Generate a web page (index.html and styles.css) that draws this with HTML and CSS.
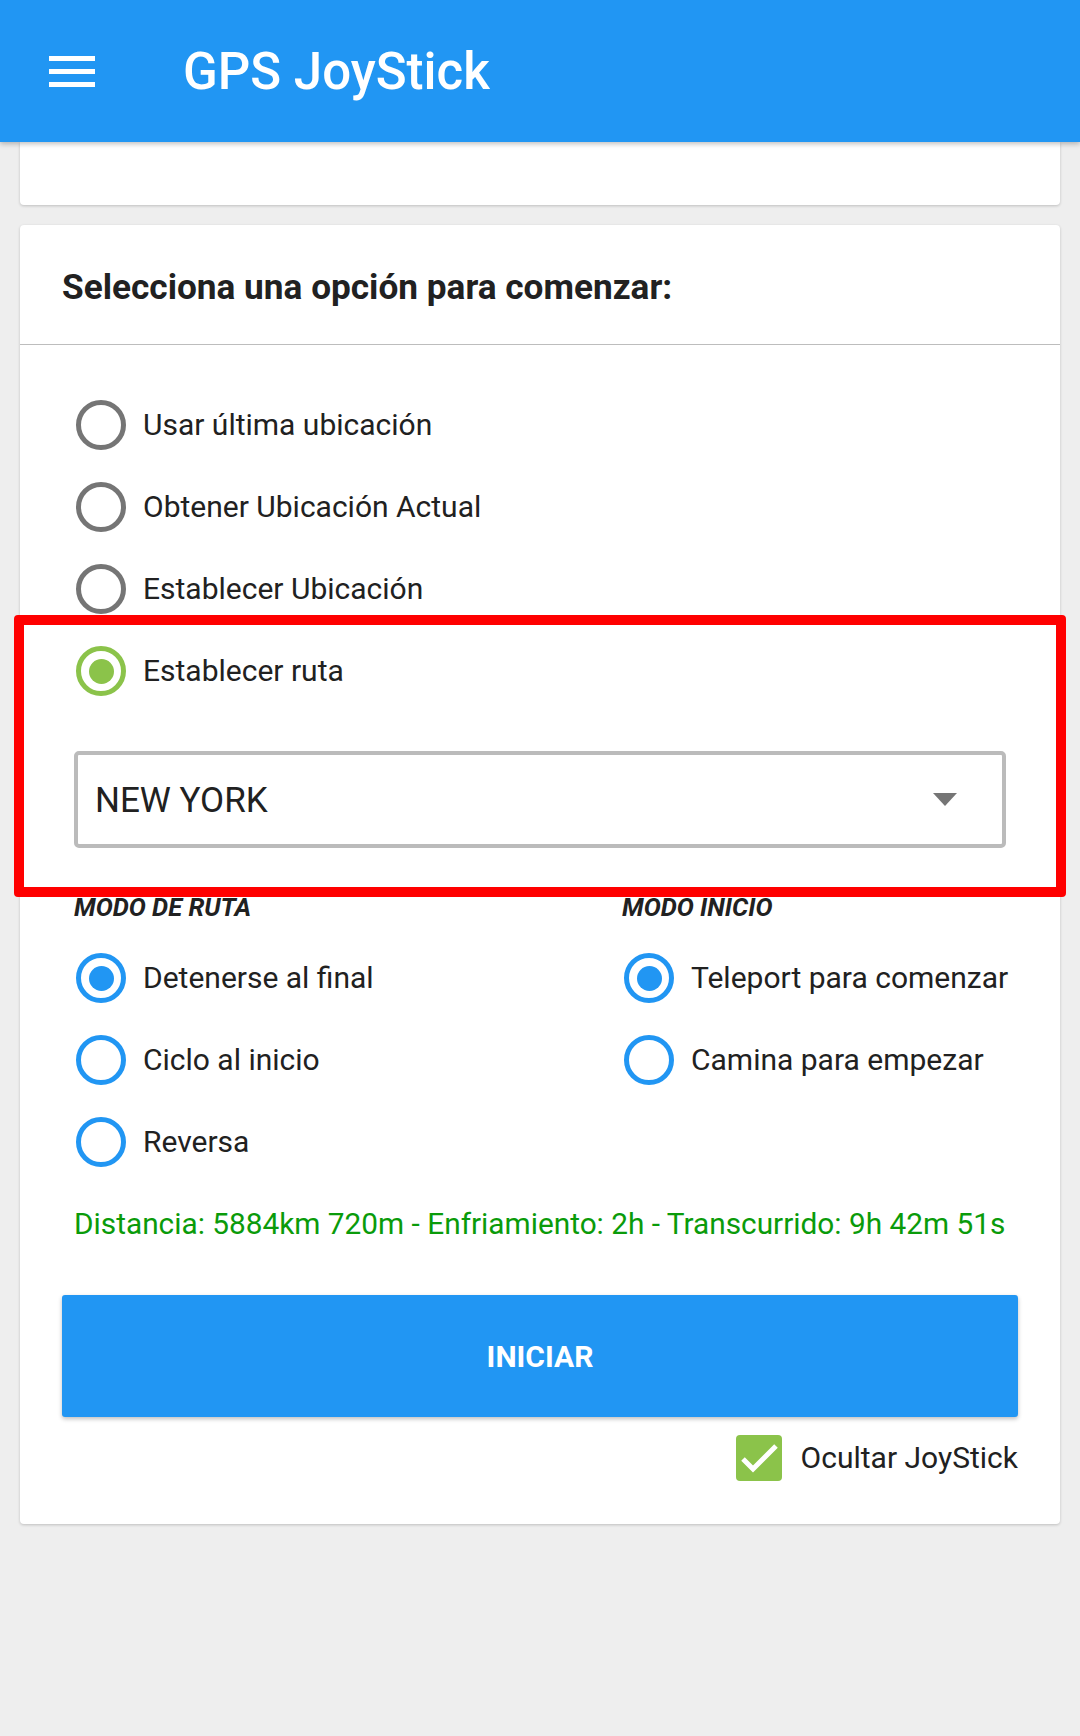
FILE: index.html
```html
<!DOCTYPE html>
<html lang="es">
<head>
<meta charset="utf-8">
<title>GPS JoyStick</title>
<link rel="stylesheet" href="styles.css">
</head>
<body>
<header class="appbar">
  <div class="menu"><span></span><span></span><span></span></div>
  <h1 class="title">GPS JoyStick</h1>
</header>
<main class="content">
  <div class="card card-top"></div>
  <section class="card card-main">
    <div class="card-header">Selecciona una opción para comenzar:</div>
    <div class="options">
      <div class="radio-row"><span class="radio gray"></span><span class="label">Usar última ubicación</span></div>
      <div class="radio-row"><span class="radio gray"></span><span class="label">Obtener Ubicación Actual</span></div>
      <div class="radio-row"><span class="radio gray"></span><span class="label">Establecer Ubicación</span></div>
      <div class="radio-row"><span class="radio green checked"></span><span class="label">Establecer ruta</span></div>
    </div>
    <div class="select"><span class="select-text">NEW YORK</span><span class="caret"></span></div>
    <div class="modes">
      <div class="mode-col">
        <div class="mode-title">MODO DE RUTA</div>
        <div class="radio-row"><span class="radio blue checked"></span><span class="label">Detenerse al final</span></div>
        <div class="radio-row"><span class="radio blue"></span><span class="label">Ciclo al inicio</span></div>
        <div class="radio-row"><span class="radio blue"></span><span class="label">Reversa</span></div>
      </div>
      <div class="mode-col">
        <div class="mode-title">MODO INICIO</div>
        <div class="radio-row"><span class="radio blue checked"></span><span class="label">Teleport para comenzar</span></div>
        <div class="radio-row"><span class="radio blue"></span><span class="label">Camina para empezar</span></div>
      </div>
    </div>
    <p class="status">Distancia: 5884km 720m - Enfriamiento: 2h - Transcurrido: 9h 42m 51s</p>
    <button class="btn">INICIAR</button>
    <div class="check-row">
      <svg class="checkbox" width="46" height="46" viewBox="0 0 46 46"><rect width="46" height="46" rx="4" fill="#8BC34A"/><polyline points="7,24 17,34 40,11" fill="none" stroke="#fff" stroke-width="5"/></svg>
      <span class="check-label">Ocultar JoyStick</span>
    </div>
  </section>
</main>
<div class="highlight"></div>
</body>
</html>
```
FILE: styles.css
```css
* { box-sizing: border-box; }
html, body { margin: 0; padding: 0; }
body {
  background: #eeeeee;
  font-family: Roboto, "Noto Sans", sans-serif;
  width: 1080px;
  min-height: 1736px;
  position: relative;
}
.appbar {
  position: relative;
  z-index: 2;
  height: 142px;
  background: #2196F3;
  display: flex;
  align-items: center;
  padding-left: 49px;
  box-shadow: 0 2px 5px rgba(0,0,0,0.25);
}
.menu {
  display: flex;
  flex-direction: column;
  gap: 8px;
  width: 46px;
}
.menu span {
  display: block;
  height: 5px;
  background: #fff;
}
.title {
  margin: 0 0 0 88px;
  padding-top: 2px;
  color: #fff;
  font-size: 51px;
  font-weight: 500;
  line-height: 60px;
}
.content { padding: 0 20px; }
.card {
  background: #fff;
  border-radius: 4px;
  box-shadow: 0 1px 3px rgba(0,0,0,0.2);
}
.card-top {
  height: 63px;
  border-radius: 0 0 4px 4px;
}
.card-main {
  margin-top: 20px;
  padding-bottom: 43px;
}
.card-header {
  padding: 42px 42px 37px;
  font-size: 35.2px;
  font-weight: 700;
  line-height: 40px;
  color: #212121;
  border-bottom: 1px solid #bdbdbd;
}
.options { padding-top: 39px; }
.radio-row {
  height: 82px;
  display: flex;
  align-items: center;
  padding-left: 56px;
}
.mode-col .radio-row { padding-left: 2px; }
.radio {
  width: 50px;
  height: 50px;
  border-radius: 50%;
  border: 5px solid #757575;
  display: flex;
  align-items: center;
  justify-content: center;
  flex: none;
}
.radio.green { border-color: #8BC34A; }
.radio.blue { border-color: #2196F3; }
.radio.checked::after {
  content: "";
  width: 25px;
  height: 25px;
  border-radius: 50%;
}
.radio.green.checked::after { background: #8BC34A; }
.radio.blue.checked::after { background: #2196F3; }
.label {
  margin-left: 17px;
  font-size: 30px;
  line-height: 36px;
  color: #212121;
  white-space: nowrap;
}
.select {
  margin: 39px 54px 0;
  height: 97px;
  border: 4px solid #bbbbbb;
  border-radius: 5px;
  display: flex;
  align-items: center;
  justify-content: space-between;
  padding: 0 45px 0 17px;
}
.select-text {
  font-size: 35px;
  line-height: 42px;
  color: #212121;
  padding-top: 2px;
}
.caret {
  width: 0;
  height: 0;
  border-left: 12px solid transparent;
  border-right: 12px solid transparent;
  border-top: 13px solid #757575;
}
.modes {
  display: grid;
  grid-template-columns: 548px auto;
  padding-left: 54px;
  margin-top: 44px;
}
.mode-title {
  font-size: 25.5px;
  font-weight: 700;
  font-style: italic;
  line-height: 30px;
  color: #212121;
  margin-bottom: 15px;
}
.status {
  margin: 24px 0 0;
  padding-left: 54px;
  font-size: 29.8px;
  line-height: 34px;
  color: #0a9b0a;
  white-space: nowrap;
}
.btn {
  display: block;
  width: 956px;
  height: 122px;
  margin: 54px 0 0 42px;
  border: none;
  border-radius: 3px;
  background: #2196F3;
  color: #fff;
  font-family: Roboto, sans-serif;
  font-size: 30px;
  font-weight: 700;
  box-shadow: 0 2px 4px rgba(0,0,0,0.25);
}
.check-row {
  margin-top: 18px;
  display: flex;
  justify-content: flex-end;
  align-items: center;
  padding-right: 42px;
  gap: 19px;
}
.checkbox { display: block; }
.check-label {
  font-size: 30px;
  line-height: 36px;
  color: #212121;
}
.highlight {
  position: absolute;
  left: 14px;
  top: 615px;
  width: 1052px;
  height: 282px;
  border: 10px solid #ff0000;
  border-radius: 4px;
  z-index: 3;
}
```
